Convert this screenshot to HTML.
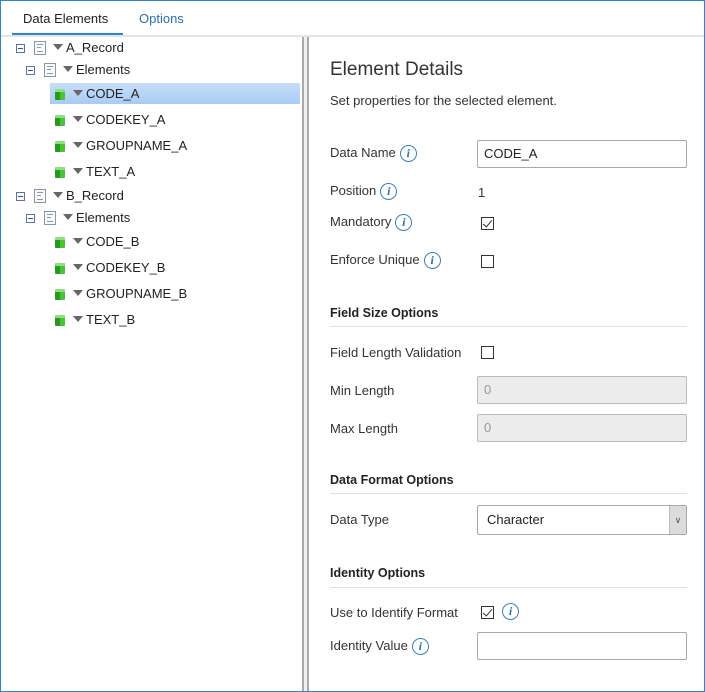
<!DOCTYPE html>
<html><head><style>
*{box-sizing:border-box;margin:0;padding:0}
body{width:705px;height:692px;background:#fff;font-family:"Liberation Sans",sans-serif;font-size:13px;color:#222;position:relative;overflow:hidden}
.frame{position:absolute;left:0;top:0;width:705px;height:692px;border:1px solid #2a86d0}
.abs{position:absolute;white-space:nowrap}
.tab{font-size:13px;top:11px}
.row{position:absolute;height:20px;line-height:20px;font-size:13px}
.minus{position:absolute;width:9px;height:9px;border:1px solid #5a6fb8;background:#fff}
.minus:after{content:"";position:absolute;left:1px;top:3px;width:5px;height:1px;background:#3a4f9a}
.doc{position:absolute;width:12px;height:14px;border:1px solid #8a97a8;background:#fafbfc}
.doc:after{content:"";position:absolute;left:2px;top:2px;width:6px;height:6px;border-top:1px solid #8a97a8;border-bottom:1px solid #8a97a8}
.doc:before{content:"";position:absolute;left:2px;top:5px;width:4px;height:1px;background:#8a97a8}
.tri{position:absolute;width:0;height:0;border-left:5px solid transparent;border-right:5px solid transparent;border-top:6px solid #666}
.cube{position:absolute;width:10px;height:11px;background:linear-gradient(90deg,#2a9a1e 50%,#49c23a 50%);border-radius:1px}
.cube:before{content:"";position:absolute;left:0;top:0;width:10px;height:3px;background:#8fe07e}
.lbl{position:absolute;left:330px;font-size:13px;color:#333}
.info{display:inline-block;width:17px;height:17px;border:1px solid #3a7fc0;border-radius:50%;color:#2a6fb0;font-family:"Liberation Serif",serif;font-style:italic;font-weight:bold;font-size:12px;line-height:15px;text-align:center;vertical-align:middle;margin-left:4px}
.input{position:absolute;left:477px;width:210px;height:28px;border:1px solid #a8a8a8;border-radius:2px;font-size:13px;line-height:26px;padding-left:6px}
.dis{background:#ececec;color:#999;border-color:#bbb}
.cb{position:absolute;width:13px;height:13px;border:1px solid #333;background:#fff}
.chk:after{content:"";position:absolute;left:3px;top:0px;width:4px;height:8px;border-right:1.5px solid #333;border-bottom:1.5px solid #333;transform:rotate(40deg)}
.sec{position:absolute;left:330px;font-weight:bold;font-size:12.5px;color:#222}
.hr{position:absolute;left:330px;width:357px;height:1px;background:#e2e2e2}
</style></head><body>
<div class="abs tab" style="left:23px;color:#222">Data Elements</div>
<div class="abs tab" style="left:139px;color:#2a6fb0">Options</div>
<div class="abs" style="left:12px;top:33px;width:111px;height:2px;background:#2a86d0"></div>
<div class="abs" style="left:1px;top:35px;width:703px;height:2px;background:#e4e4e4"></div>

<div class="abs" style="left:302px;top:37px;width:7px;height:654px;background:#f0f0f0;border-left:2px solid #aaa;border-right:2px solid #aaa"></div>

<div class="abs" style="left:50px;top:83px;width:250px;height:21px;background:linear-gradient(#c7defa,#a9cbf2)"></div>

<div class="minus" style="left:16px;top:44px"></div><div class="doc" style="left:34px;top:41px"></div><div class="tri" style="left:53px;top:44px"></div><div class="row" style="left:66px;top:38px">A_Record</div>
<div class="minus" style="left:26px;top:66px"></div><div class="doc" style="left:44px;top:63px"></div><div class="tri" style="left:63px;top:66px"></div><div class="row" style="left:76px;top:60px">Elements</div>
<div class="cube" style="left:55px;top:89px"></div><div class="tri" style="left:73px;top:90px"></div><div class="row" style="left:86px;top:84px">CODE_A</div>
<div class="cube" style="left:55px;top:115px"></div><div class="tri" style="left:73px;top:116px"></div><div class="row" style="left:86px;top:110px">CODEKEY_A</div>
<div class="cube" style="left:55px;top:141px"></div><div class="tri" style="left:73px;top:142px"></div><div class="row" style="left:86px;top:136px">GROUPNAME_A</div>
<div class="cube" style="left:55px;top:167px"></div><div class="tri" style="left:73px;top:168px"></div><div class="row" style="left:86px;top:162px">TEXT_A</div>
<div class="minus" style="left:16px;top:192px"></div><div class="doc" style="left:34px;top:189px"></div><div class="tri" style="left:53px;top:192px"></div><div class="row" style="left:66px;top:186px">B_Record</div>
<div class="minus" style="left:26px;top:214px"></div><div class="doc" style="left:44px;top:211px"></div><div class="tri" style="left:63px;top:214px"></div><div class="row" style="left:76px;top:208px">Elements</div>
<div class="cube" style="left:55px;top:237px"></div><div class="tri" style="left:73px;top:238px"></div><div class="row" style="left:86px;top:232px">CODE_B</div>
<div class="cube" style="left:55px;top:263px"></div><div class="tri" style="left:73px;top:264px"></div><div class="row" style="left:86px;top:258px">CODEKEY_B</div>
<div class="cube" style="left:55px;top:289px"></div><div class="tri" style="left:73px;top:290px"></div><div class="row" style="left:86px;top:284px">GROUPNAME_B</div>
<div class="cube" style="left:55px;top:315px"></div><div class="tri" style="left:73px;top:316px"></div><div class="row" style="left:86px;top:310px">TEXT_B</div>

<div class="abs" style="left:330px;top:59px;font-size:19px;color:#333">Element Details</div>
<div class="abs" style="left:330px;top:93px;font-size:13px;color:#333">Set properties for the selected element.</div>

<div class="lbl" style="top:145px">Data Name<span class="info">i</span></div>
<div class="input" style="top:140px">CODE_A</div>
<div class="lbl" style="top:183px">Position<span class="info">i</span></div>
<div class="abs" style="left:478px;top:185px;color:#333">1</div>
<div class="lbl" style="top:214px">Mandatory<span class="info">i</span></div>
<div class="cb chk" style="left:481px;top:217px"></div>
<div class="lbl" style="top:252px">Enforce Unique<span class="info">i</span></div>
<div class="cb" style="left:481px;top:255px"></div>

<div class="sec" style="top:306px">Field Size Options</div>
<div class="hr" style="top:326px"></div>
<div class="lbl" style="top:345px">Field Length Validation</div>
<div class="cb" style="left:481px;top:346px"></div>
<div class="lbl" style="top:383px">Min Length</div>
<div class="input dis" style="top:376px">0</div>
<div class="lbl" style="top:421px">Max Length</div>
<div class="input dis" style="top:414px">0</div>

<div class="sec" style="top:473px">Data Format Options</div>
<div class="hr" style="top:493px"></div>
<div class="lbl" style="top:512px">Data Type</div>
<div class="input" style="top:505px;height:30px;padding-left:9px;line-height:28px">Character<div style="position:absolute;right:0;top:0;width:17px;height:28px;background:#dcdcdc;border-left:1px solid #bbb;font-size:9px;line-height:28px;text-align:center;color:#555">&#8744;</div></div>

<div class="sec" style="top:566px">Identity Options</div>
<div class="hr" style="top:587px"></div>
<div class="lbl" style="top:605px">Use to Identify Format</div>
<div class="cb chk" style="left:481px;top:606px"></div>
<div class="abs" style="left:498px;top:603px"><span class="info">i</span></div>
<div class="lbl" style="top:638px">Identity Value<span class="info">i</span></div>
<div class="input" style="top:632px"></div>

<div class="frame"></div>
</body></html>
